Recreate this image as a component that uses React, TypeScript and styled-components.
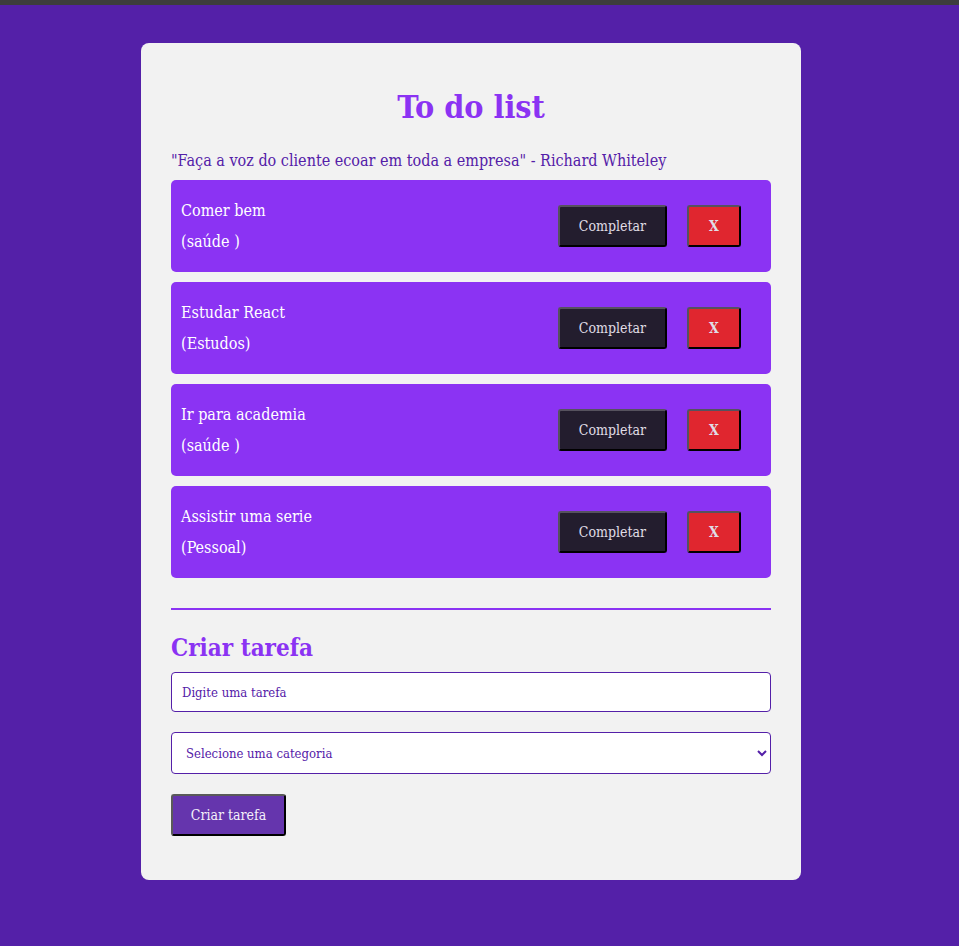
import React from "react";
import styled, { createGlobalStyle } from "styled-components";

const FONT = `"DejaVu Serif Condensed", "DejaVu Serif", serif`;

const Global = createGlobalStyle`
  html, body { margin: 0; padding: 0; }
  body {
    background: #5420a8;
    font-family: ${FONT};
    min-height: 946px;
  }
  * { box-sizing: border-box; }
`;

const TopBar = styled.div`
  height: 5px;
  background: #3d3d3d;
`;

const Page = styled.div`
  display: flex;
  justify-content: center;
  padding: 38px 17px 66px 0;
`;

const Card = styled.main`
  width: 660px;
  background: #f2f2f2;
  border-radius: 8px;
  padding: 44px 30px 44px;
  display: flex;
  flex-direction: column;
`;

const Title = styled.h1`
  margin: 0;
  text-align: center;
  color: #8b33f3;
  font-size: 32px;
  line-height: 40px;
  font-weight: 700;
`;

const Quote = styled.p`
  margin: 22px 0 0;
  color: #5420a8;
  font-size: 16px;
  line-height: 24px;
`;

const List = styled.div`
  margin-top: 7px;
  display: flex;
  flex-direction: column;
  gap: 10px;
`;

const Item = styled.div`
  height: 92px;
  background: #8b33f3;
  border-radius: 5px;
  padding: 0 30px 0 10px;
  display: flex;
  align-items: center;
  justify-content: space-between;
`;

const ItemText = styled.div`
  display: flex;
  flex-direction: column;
  gap: 7px;
  color: #ffffff;
  font-size: 16px;
  line-height: 24px;
`;

const Actions = styled.div`
  display: flex;
  gap: 20px;
`;

const ActionButton = styled.button<{ $variant: "complete" | "remove" }>`
  height: 42px;
  width: ${(p) => (p.$variant === "complete" ? "109px" : "54px")};
  font-family: ${FONT};
  font-size: 14px;
  font-weight: ${(p) => (p.$variant === "complete" ? 400 : 700)};
  color: #e0dde6;
  background: ${(p) => (p.$variant === "complete" ? "#231d2e" : "#e0262f")};
  border: 2px outset #56525e;
  border-right-color: #0b0910;
  border-bottom-color: #0b0910;
  border-radius: 3px;
  cursor: pointer;
`;

const Divider = styled.hr`
  margin: 30px 0 0;
  border: none;
  height: 2px;
  background: #8b33f3;
`;

const SubTitle = styled.h2`
  margin: 22px 0 0;
  color: #8b33f3;
  font-size: 24px;
  line-height: 32px;
  font-weight: 700;
`;

const Form = styled.form`
  margin-top: 8px;
  display: flex;
  flex-direction: column;
  align-items: flex-start;
  gap: 20px;
`;

const Input = styled.input`
  width: 100%;
  height: 40px;
  padding: 0 10px;
  border: 1px solid #5420a8;
  border-radius: 4px;
  background: #fff;
  font-family: ${FONT};
  font-size: 13px;
  color: #5420a8;
  &::placeholder { color: #5420a8; }
`;

const Select = styled.select`
  width: 100%;
  height: 42px;
  padding: 0 10px;
  border: 1px solid #5420a8;
  border-radius: 4px;
  background: #fff;
  font-family: ${FONT};
  font-size: 13px;
  color: #5420a8;
`;

const SubmitButton = styled.button`
  height: 42px;
  width: 115px;
  font-family: ${FONT};
  font-size: 14px;
  color: #f4f0fa;
  background: #6535ad;
  border: 2px outset #5a5a5a;
  border-right-color: #141018;
  border-bottom-color: #141018;
  border-radius: 3px;
  cursor: pointer;
`;

const todos = [
  { text: "Comer bem", category: "saúde " },
  { text: "Estudar React", category: "Estudos" },
  { text: "Ir para academia", category: "saúde " },
  { text: "Assistir uma serie", category: "Pessoal" },
];

export default function App() {
  return (
    <>
      <Global />
      <TopBar />
      <Page>
        <Card>
          <Title>To do list</Title>
          <Quote>"Faça a voz do cliente ecoar em toda a empresa" - Richard Whiteley</Quote>
          <List>
            {todos.map((t) => (
              <Item key={t.text}>
                <ItemText>
                  <span>{t.text}</span>
                  <span>({t.category})</span>
                </ItemText>
                <Actions>
                  <ActionButton $variant="complete">Completar</ActionButton>
                  <ActionButton $variant="remove">X</ActionButton>
                </Actions>
              </Item>
            ))}
          </List>
          <Divider />
          <SubTitle>Criar tarefa</SubTitle>
          <Form onSubmit={(e) => e.preventDefault()}>
            <Input placeholder="Digite uma tarefa" />
            <Select defaultValue="">
              <option value="">Selecione uma categoria</option>
              <option value="Trabalho">Trabalho</option>
              <option value="Pessoal">Pessoal</option>
              <option value="Estudos">Estudos</option>
            </Select>
            <SubmitButton type="submit">Criar tarefa</SubmitButton>
          </Form>
        </Card>
      </Page>
    </>
  );
}
